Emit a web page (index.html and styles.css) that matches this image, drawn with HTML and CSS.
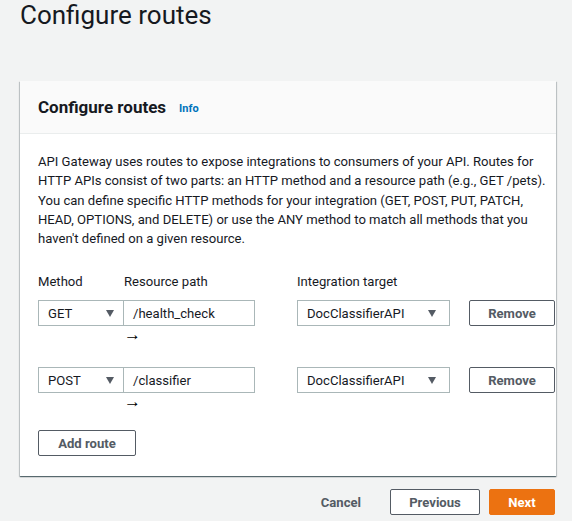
FILE: index.html
```html
<!DOCTYPE html>
<html>
<head>
<meta charset="utf-8">
<link rel="stylesheet" href="styles.css">
</head>
<body>
<h1 class="page-title">Configure routes</h1>
<div class="card">
  <div class="card-header">
    <h2 class="card-title">Configure routes</h2>
    <a class="info" href="#">Info</a>
  </div>
  <div class="card-body">
    <p class="desc">API Gateway uses routes to expose integrations to consumers of your API. Routes for HTTP APIs consist of two parts: an HTTP method and a resource path (e.g., GET /pets). You can define specific HTTP methods for your integration (GET, POST, PUT, PATCH, HEAD, OPTIONS, and DELETE) or use the ANY method to match all methods that you haven't defined on a given resource.</p>
    <div class="routes">
      <div class="labels">
        <span class="lbl">Method</span>
        <span class="lbl">Resource path</span>
        <span class="lbl"></span>
        <span class="lbl">Integration target</span>
      </div>
      <div class="route">
        <div class="select method"><span>GET</span><span class="caret"></span></div>
        <div class="pathcell">
          <div class="input">/health_check</div>
          <div class="arrow">&rarr;</div>
        </div>
        <div></div>
        <div class="select target"><span>DocClassifierAPI</span><span class="caret"></span></div>
        <div></div>
        <button class="btn">Remove</button>
      </div>
      <div class="route">
        <div class="select method"><span>POST</span><span class="caret"></span></div>
        <div class="pathcell">
          <div class="input">/classifier</div>
          <div class="arrow">&rarr;</div>
        </div>
        <div></div>
        <div class="select target"><span>DocClassifierAPI</span><span class="caret"></span></div>
        <div></div>
        <button class="btn">Remove</button>
      </div>
    </div>
    <button class="btn add">Add route</button>
  </div>
</div>
<div class="footer">
  <button class="link">Cancel</button>
  <button class="btn prev">Previous</button>
  <button class="btn primary">Next</button>
</div>
</body>
</html>
```
FILE: styles.css
```css
* { box-sizing: border-box; }
body {
  margin: 0;
  background: #f2f3f3;
  font-family: Roboto, "Open Sans", Arial, sans-serif;
  color: #16191f;
  font-size: 13.1px;
  overflow: hidden;
}
.page-title {
  margin: 0;
  padding: 0 0 0 20px;
  font-weight: 400;
  font-size: 26px;
  line-height: 31px;
  height: 81px;
  color: #16191f;
}
.card {
  margin: 0 16px 0 20px;
  background: #fff;
  box-shadow: 0 1px 1px 0 rgba(0,28,36,.5), 1px 1px 1px 0 rgba(0,28,36,.15), -1px 1px 1px 0 rgba(0,28,36,.15);
  height: 395px;
  overflow: hidden;
}
.card-header {
  background: #fafafa;
  border-bottom: 1px solid #eaeded;
  height: 53px;
  padding: 0 18px;
  display: flex;
  align-items: center;
  gap: 13px;
}
.card-title {
  margin: 0;
  font-size: 17px;
  font-weight: 700;
}
.info {
  color: #0073bb;
  font-size: 11px;
  font-weight: 700;
  text-decoration: none;
  margin-top: 2px;
}
.card-body {
  padding: 18px 0 0 18px;
}
.desc {
  margin: 0;
  line-height: 19.3px;
  padding-right: 6px;
}
.routes { margin-top: 25px; }
.labels, .route {
  display: grid;
  grid-template-columns: 86px 131px 42px 153px 19px 86px;
}
.labels { height: 27px; }
.lbl { line-height: 18px; }
.route { height: 67px; align-items: start; }
.select, .input {
  height: 26px;
  border: 1px solid #aab7b8;
  display: flex;
  align-items: center;
  background: #fff;
}
.select { justify-content: space-between; padding: 0 9px 0 9px; }
.target { padding-right: 13px; }
.input { padding-left: 9px; border-left: none; }
.caret {
  width: 0; height: 0;
  border-left: 4.5px solid transparent;
  border-right: 4.5px solid transparent;
  border-top: 7px solid #545b64;
  margin-top: 1px;
}
.arrow {
  font-size: 17px;
  line-height: 14px;
  margin-top: 1px;
  color: #000;
}
.btn {
  font-family: inherit;
  height: 26px;
  border: 1px solid #545b64;
  border-radius: 2px;
  background: #fff;
  color: #545b64;
  font-weight: 700;
  font-size: 13.1px;
  padding: 0;
  cursor: pointer;
}
.add { width: 98px; margin-top: -4px; }
.footer {
  display: flex;
  justify-content: flex-end;
  align-items: center;
  gap: 9px;
  padding: 13px 17px 0 0;
}
.link {
  font-family: inherit;
  background: none;
  border: none;
  padding: 0;
  color: #545b64;
  font-weight: 700;
  font-size: 13.1px;
  margin-right: 20px;
}
.prev { width: 90px; }
.primary {
  width: 66px;
  background: #ec7211;
  border-color: #ec7211;
  color: #fff;
}
```
